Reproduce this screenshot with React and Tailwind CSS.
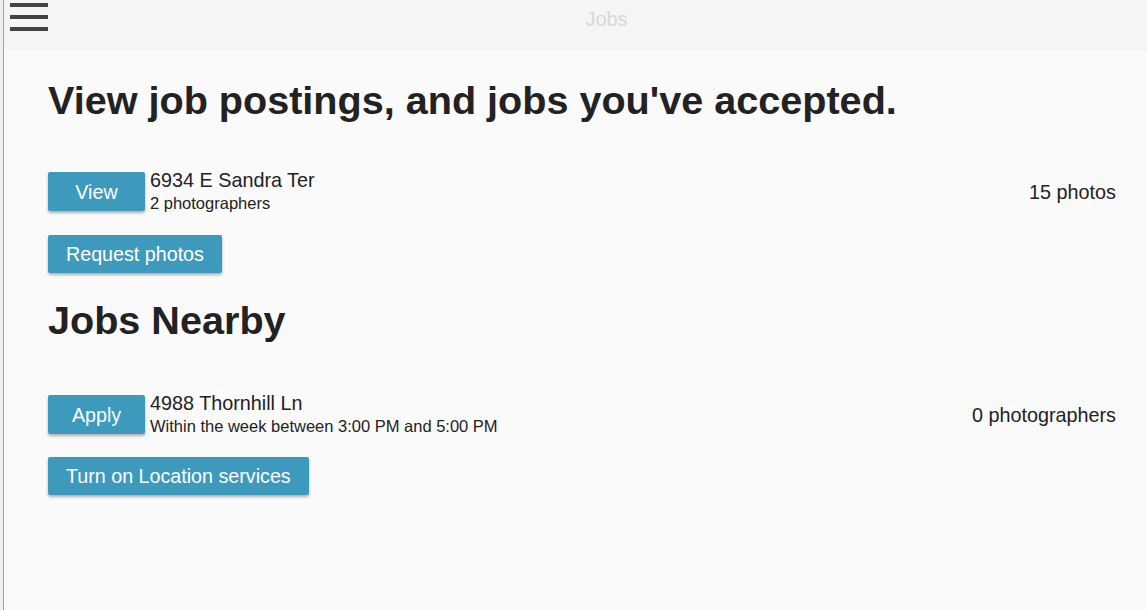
import React from 'react';

const jobs = [{ id: 1, address: '6934 E Sandra Ter', sub: '2 photographers', right: '15 photos' }];
const nearby = [{ id: 2, address: '4988 Thornhill Ln', sub: 'Within the week between 3:00 PM and 5:00 PM', right: '0 photographers' }];

const Btn = ({ children, className = '' }) => (
  <button className={`bg-[#3e9abd] text-white text-[19.7px] leading-none rounded-[2px] shadow-[0_2px_3px_rgba(0,0,0,0.3)] ${className}`}>
    {children}
  </button>
);

const JobRow = ({ job, action }) => (
  <div className="flex items-center h-[39px]">
    <Btn className="w-[97px] h-[39px] pt-[2px]">{action}</Btn>
    <div className="flex flex-col ml-[5px] -mt-[2px]">
      <span className="text-[19.8px] leading-[24px] text-[#222]">{job.address}</span>
      <span className="text-[16.5px] leading-[22px] text-[#222]">{job.sub}</span>
    </div>
    <span className="ml-auto text-[19.8px] text-[#222] mt-[2px]">{job.right}</span>
  </div>
);

export default function App() {
  return (
    <div className="w-[1147px] h-[610px] flex bg-[#e8e8e8] font-['Liberation_Sans',Arial,sans-serif]">
      <div className="w-[3px] bg-[#f0f0f0]" />
      <div className="w-[1px] bg-[#a0a0a0]" />
      <div className="flex-1 flex flex-col bg-[#fafafa]">
        <header className="relative h-[50px] bg-[#f5f5f5] flex items-center justify-center">
          <button className="absolute left-[6px] top-[3px] flex flex-col gap-[8px]">
            <span className="block w-[38px] h-[4px] bg-[#444]" />
            <span className="block w-[38px] h-[4px] bg-[#444]" />
            <span className="block w-[38px] h-[4px] bg-[#444]" />
          </button>
          <span className="text-[20px] text-[#d8d8d8] -mt-[13px] ml-[62px]">Jobs</span>
        </header>
        <main className="pl-[44px] pr-[31px]">
          <h1 className="text-[39.6px] font-bold text-[#222] mt-[27px] leading-[46px]">
            View job postings, and jobs you've accepted.
          </h1>
          <div className="mt-[49px] flex flex-col gap-[24px]">
            {jobs.map((j) => <JobRow key={j.id} job={j} action="View" />)}
            <div>
              <Btn className="px-[18px] h-[38px] pt-[1px]">Request photos</Btn>
            </div>
          </div>
          <h2 className="text-[39.6px] font-bold text-[#222] mt-[24px] leading-[46px]">Jobs Nearby</h2>
          <div className="mt-[52px] flex flex-col gap-[23px]">
            {nearby.map((j) => <JobRow key={j.id} job={j} action="Apply" />)}
            <div>
              <Btn className="px-[18px] h-[38px] pt-[1px]">Turn on Location services</Btn>
            </div>
          </div>
        </main>
      </div>
    </div>
  );
}
